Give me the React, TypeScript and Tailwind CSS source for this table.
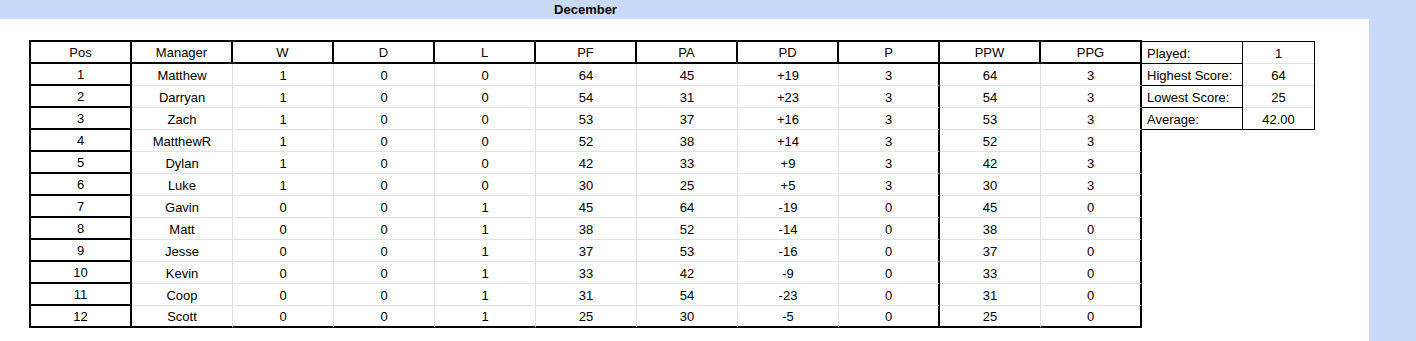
const columns = ['Pos', 'Manager', 'W', 'D', 'L', 'PF', 'PA', 'PD', 'P', 'PPW', 'PPG'];

const rows: (string | number)[][] = [
  [1, 'Matthew', 1, 0, 0, 64, 45, '+19', 3, 64, 3],
  [2, 'Darryan', 1, 0, 0, 54, 31, '+23', 3, 54, 3],
  [3, 'Zach', 1, 0, 0, 53, 37, '+16', 3, 53, 3],
  [4, 'MatthewR', 1, 0, 0, 52, 38, '+14', 3, 52, 3],
  [5, 'Dylan', 1, 0, 0, 42, 33, '+9', 3, 42, 3],
  [6, 'Luke', 1, 0, 0, 30, 25, '+5', 3, 30, 3],
  [7, 'Gavin', 0, 0, 1, 45, 64, '-19', 0, 45, 0],
  [8, 'Matt', 0, 0, 1, 38, 52, '-14', 0, 38, 0],
  [9, 'Jesse', 0, 0, 1, 37, 53, '-16', 0, 37, 0],
  [10, 'Kevin', 0, 0, 1, 33, 42, '-9', 0, 33, 0],
  [11, 'Coop', 0, 0, 1, 31, 54, '-23', 0, 31, 0],
  [12, 'Scott', 0, 0, 1, 25, 30, '-5', 0, 25, 0],
];

const stats = [
  ['Played:', '1'],
  ['Highest Score:', '64'],
  ['Lowest Score:', '25'],
  ['Average:', '42.00'],
];

function bodyCellClass(col: number, last: boolean) {
  const right =
    col === 0 || col === 8 || col === 10 ? 'border-r-2 border-r-black' : 'border-r border-r-[#e2e2e2]';
  const bottom =
    col === 0 || last ? 'border-b-2 border-b-black' : 'border-b border-b-[#e2e2e2]';
  return `${right} ${bottom}`;
}

export default function App() {
  return (
    <div className="w-[1416px] h-[341px] bg-white text-black text-[13px] leading-none font-['Liberation_Sans',Arial,sans-serif]">
      <div className="h-[19px] bg-[#c9daf8] flex items-center">
        <div className="ml-[30px] w-[1111px] text-center font-bold">December</div>
      </div>

      <div className="flex h-[322px]">
        <div className="w-[1369px] flex items-start pt-[21px] pl-[29px]">
          {/* standings */}
          <div className="border-t-2 border-l-2 border-black">
            <div className="flex">
              {columns.map((c) => (
                <div
                  key={c}
                  className="w-[101px] h-[22px] border-r-2 border-b-2 border-black flex items-center justify-center pt-[1px]"
                >
                  {c}
                </div>
              ))}
            </div>
            {rows.map((r, i) => (
              <div key={i} className="flex">
                {r.map((v, j) => (
                  <div
                    key={j}
                    className={`w-[101px] h-[22px] flex items-center justify-center pt-[1px] ${bodyCellClass(
                      j,
                      i === rows.length - 1,
                    )}`}
                  >
                    {v}
                  </div>
                ))}
              </div>
            ))}
          </div>

          {/* summary */}
          <div className="mt-[1px] border-t border-r border-black">
            {stats.map(([label, value], i) => (
              <div key={label} className="flex">
                <div className="w-[101px] h-[22px] border-r border-b border-black flex items-center pl-[5px] pt-[1px]">
                  {label}
                </div>
                <div
                  className={`w-[71px] h-[22px] flex items-center justify-center pt-[1px] border-b ${
                    i === stats.length - 1 ? 'border-b-black' : 'border-b-[#e2e2e2]'
                  }`}
                >
                  {value}
                </div>
              </div>
            ))}
          </div>
        </div>
        <div className="flex-1 bg-[#c9daf8]" />
      </div>
    </div>
  );
}
